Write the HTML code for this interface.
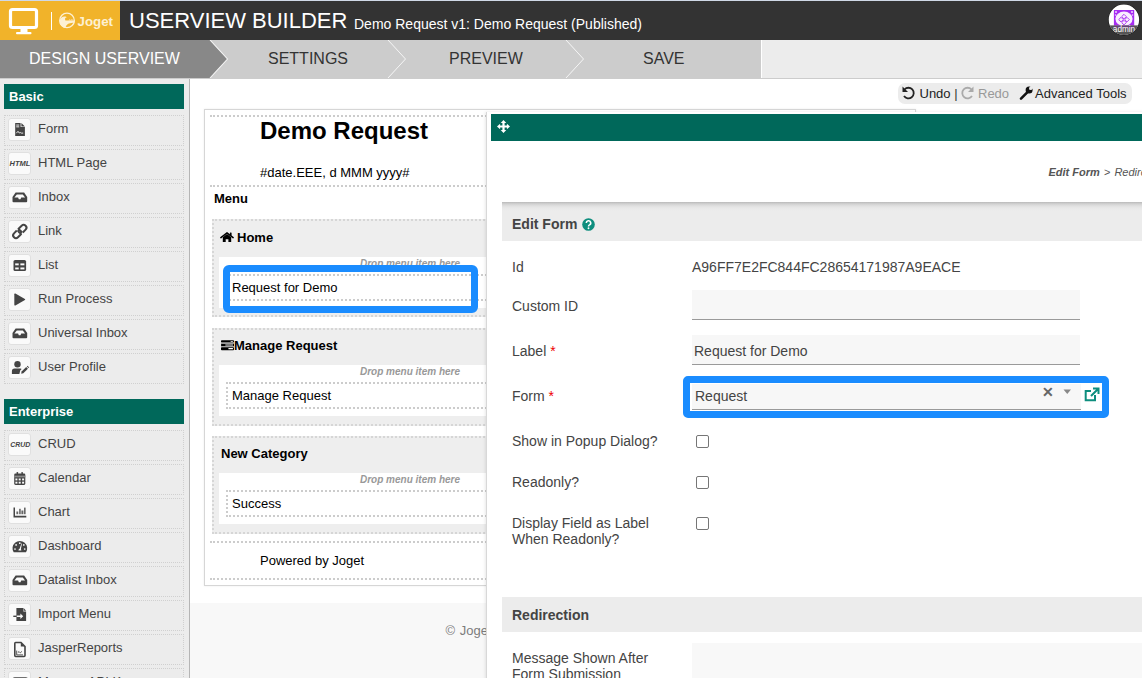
<!DOCTYPE html>
<html><head><meta charset="utf-8">
<style>
*{box-sizing:border-box;}
html,body{margin:0;padding:0;}
body{width:1142px;height:678px;overflow:hidden;position:relative;background:#fff;font-family:"Liberation Sans",sans-serif;color:#333;}
.a{position:absolute;white-space:nowrap;}
#topline{left:0;top:0;width:1142px;height:1px;background:#cfd8e6;}
#topbar{left:0;top:1px;width:1142px;height:39px;background:#333;}
#logo{left:0;top:1px;width:120px;height:39px;background:#f1b32a;}
#title{left:129px;top:8px;color:#fff;font-size:22px;line-height:26px;}
#subtitle{left:354px;top:16px;color:#fff;font-size:14px;line-height:16px;}
#nav{left:0;top:40px;width:1142px;height:39px;background:#ececec;border-bottom:1px solid #ccc;}
.tabt{top:40px;height:38px;font-size:16px;line-height:38px;color:#333;}
#sidebar{left:0;top:79px;width:190px;height:599px;background:#ececec;border-right:1px solid #b5b5b5;}
.hdr{position:absolute;left:4px;width:180px;height:25px;background:#00685a;color:#fff;font-weight:bold;font-size:13px;line-height:25px;padding-left:5px;}
.item{position:absolute;left:4px;width:180px;height:31px;border:1px dotted #d0d0d0;}
.item .ic{position:absolute;left:3px;top:2px;width:23px;height:23px;background:#fafafa;border:1px solid #e0e0e0;border-radius:3px;}
.item .ic svg{position:absolute;left:0;top:0;}
.item .tx{position:absolute;left:33px;top:-2px;line-height:29px;font-size:13px;color:#444;}

.cat{left:212px;width:700px;background:#eee;border:2px dotted #d6d6d6;}
.inner{left:219px;width:690px;background:#fff;}
.mi{left:226px;width:680px;height:27px;border:2px dotted #ccc;background:#fff;}
.drop{left:360px;font-size:10px;font-weight:bold;font-style:italic;color:#999;line-height:12px;}
.ct{font-size:13px;font-weight:bold;color:#000;line-height:16px;}
.mt{left:232px;font-size:13px;color:#000;line-height:16px;}

.lbl{font-size:14px;line-height:16px;color:#444;}
.req{color:#e00;}
.inp{left:692px;width:388px;height:30px;background:#f7f7f7;border-bottom:1px solid #9a9a9a;}
.cb{left:696px;width:13px;height:13px;border:1px solid #767676;border-radius:2px;background:#fff;}
</style></head>
<body>
<div id="topline" class="a"></div>
<div id="topbar" class="a"></div>
<div id="logo" class="a">
 <svg width="120" height="39" style="position:absolute;left:0;top:-1px">
  <rect x="10.5" y="9.5" width="26" height="18" rx="2" fill="none" stroke="#fff" stroke-width="3.2"/>
  <rect x="20.5" y="29" width="7" height="3" fill="#fff"/>
  <rect x="16" y="32" width="15.5" height="2.2" rx="1" fill="#fff"/>
  <rect x="51" y="12" width="1" height="18" fill="#fff"/>
  <circle cx="67" cy="20.4" r="7.3" fill="none" stroke="#fdf0d2" stroke-width="1.3"/>
  <path d="M59.6 21 C60 18.5 62 16.6 64.5 16.6 C65.8 16.6 66.8 17.2 66.6 17.5 C65.2 17.4 64.6 18.6 65.4 20.4 L74.7 20.4 L74.6 22.7 C70 22.8 67 23.5 65.9 26.5 L65.5 28.1 C62 27.5 59.6 24.8 59.6 21 Z" fill="#fdf0d2"/>
  <path d="M68.5 20.4 L69.5 19 L70.5 20 L72 19 L73.5 20.4Z" fill="#fdf0d2" opacity="0.7"/>
 </svg>
 <div class="a" style="left:77.5px;top:13px;font-size:13.3px;font-weight:bold;color:#fdf0d2;line-height:16px">Joget</div>
</div>
<div id="title" class="a">USERVIEW BUILDER</div>
<div id="subtitle" class="a">Demo Request v1: Demo Request (Published)</div>

<svg class="a" style="left:1106px;top:2px" width="36" height="36" viewBox="0 0 36 36">
 <defs><clipPath id="avc"><circle cx="17.9" cy="17.75" r="15.2"/></clipPath></defs>
 <circle cx="17.9" cy="17.75" r="15.7" fill="#111"/>
 <g clip-path="url(#avc)">
  <rect x="0" y="0" width="36" height="36" fill="#fff"/>
  <rect x="7.9" y="8" width="20.3" height="15.4" fill="#a62cf2"/>
  <ellipse cx="18" cy="16.8" rx="8.6" ry="7.2" fill="#fff" opacity="0.92"/>
  <g fill="#fff" opacity="0.8"><circle cx="10" cy="10" r="1"/><circle cx="26" cy="10" r="1"/><circle cx="9.5" cy="13" r="0.8"/><circle cx="26.5" cy="13" r="0.8"/></g>
  <g fill="none" stroke="#a62cf2" stroke-width="0.9">
   <path d="M18 12.3 L20.3 14.6 L18 16.9 L15.7 14.6 Z"/>
   <path d="M15 15.3 L17.3 17.6 L15 19.9 L12.7 17.6 Z"/>
   <path d="M21 15.3 L23.3 17.6 L21 19.9 L18.7 17.6 Z"/>
   <path d="M18 18.3 L20.3 20.6 L18 22.9 L15.7 20.6 Z"/>
  </g>
  <rect x="0" y="23.4" width="36" height="13" fill="#555"/>
  <rect x="7.9" y="23.4" width="20.3" height="3" fill="#6a3a8a" opacity="0.6"/>
  <text x="18" y="30.2" text-anchor="middle" font-family="Liberation Sans" font-size="8.2" fill="#fff">admin</text>
 </g>
</svg>
<div id="nav" class="a"></div>
<svg class="a" style="left:0;top:40px" width="762" height="38">
 <polygon points="566,0 761,0 761,38 566,38 583.5,19" fill="#ccc"/>
 <polygon points="388,0 566,0 583.5,19 566,38 388,38 405.5,19" fill="#ccc"/>
 <polygon points="210,0 388,0 405.5,19 388,38 210,38 227.5,19" fill="#ccc"/>
 <polygon points="0,0 210,0 227.5,19 210,38 0,38" fill="#888"/>
 <polyline points="210,0 227.5,19 210,38" fill="none" stroke="#f4f4f4" stroke-width="1.1"/>
 <polyline points="388,0 405.5,19 388,38" fill="none" stroke="#f4f4f4" stroke-width="1"/>
 <polyline points="566,0 583.5,19 566,38" fill="none" stroke="#f4f4f4" stroke-width="1"/>
 <rect x="761" y="0" width="1" height="38" fill="#fff"/>
</svg>
<div class="a tabt" style="left:29px;color:#fff">DESIGN USERVIEW</div>
<div class="a tabt" style="left:268px">SETTINGS</div>
<div class="a tabt" style="left:449px">PREVIEW</div>
<div class="a tabt" style="left:643px">SAVE</div>

<div id="sidebar" class="a">
  <div class="hdr" style="top:5px">Basic</div>
  <div class="item" style="top:36px"><div class="ic"><svg width="22" height="22" viewBox="0 0 22 22" style="position:absolute;left:-0.3px;top:-0.5px;overflow:visible"><path d="M6.2 3.9 H11.6 V8.1 H15.9 V17.1 H6.2 Z" fill="#444"/><path d="M12.4 3.9 L15.9 7.4 H12.4 Z" fill="#444"/><rect x="7.2" y="5.6" width="3" height="0.9" fill="#fafafa"/><rect x="7.2" y="7.4" width="3" height="0.9" fill="#fafafa"/><path d="M7.3 14.2 L9 12.3 L10.3 14 L11.3 13.5 L12.4 14.1 L14.2 14.1" stroke="#fafafa" stroke-width="0.9" fill="none"/></svg></div><div class="tx">Form</div></div>
  <div class="item" style="top:70px"><div class="ic"><svg width="22" height="22" viewBox="0 0 22 22" style="position:absolute;left:-0.3px;top:-0.5px;overflow:visible"><text x="0.6" y="13.4" font-family="Liberation Sans" font-weight="bold" font-style="italic" font-size="7.6" textLength="20.7" lengthAdjust="spacingAndGlyphs" fill="#444">HTML</text></svg></div><div class="tx">HTML Page</div></div>
  <div class="item" style="top:104px"><div class="ic"><svg width="22" height="22" viewBox="0 0 22 22" style="position:absolute;left:-0.3px;top:-0.5px;overflow:visible"><path d="M6.6 5.6 H15.1 L18.2 10 V14.3 Q18.2 15.3 17.2 15.3 H4.5 Q3.5 15.3 3.5 14.3 V10 Z" fill="#444"/><path d="M7.8 7.4 H13.8 L16.1 10.5 H12.2 L11.5 12.2 H9.8 L9.1 10.5 H5.4 Z" fill="#fafafa"/></svg></div><div class="tx">Inbox</div></div>
  <div class="item" style="top:138px"><div class="ic"><svg width="22" height="22" viewBox="0 0 22 22" style="position:absolute;left:-0.3px;top:-0.5px;overflow:visible"><g transform="rotate(-45 10.8 10.5)" fill="none" stroke="#444" stroke-width="2"><rect x="2.6" y="7.7" width="9.2" height="5.6" rx="2.8"/><rect x="9.8" y="7.7" width="9.2" height="5.6" rx="2.8"/></g><g transform="rotate(-45 10.8 10.5)"><rect x="9.3" y="6.3" width="1.6" height="1.8" fill="#fafafa"/><rect x="10.7" y="12.9" width="1.6" height="1.8" fill="#fafafa"/></g></svg></div><div class="tx">Link</div></div>
  <div class="item" style="top:172px"><div class="ic"><svg width="22" height="22" viewBox="0 0 22 22" style="position:absolute;left:-0.3px;top:-0.5px;overflow:visible"><rect x="4.5" y="4.9" width="12.6" height="11.2" rx="1.6" fill="#444"/><rect x="6.2" y="8.4" width="3.5" height="1.9" fill="#fafafa"/><rect x="11.4" y="8.4" width="4" height="1.9" fill="#fafafa"/><rect x="6.2" y="12.5" width="3.5" height="1.9" fill="#fafafa"/><rect x="11.4" y="12.5" width="4" height="1.9" fill="#fafafa"/></svg></div><div class="tx">List</div></div>
  <div class="item" style="top:206px"><div class="ic"><svg width="22" height="22" viewBox="0 0 22 22" style="position:absolute;left:-0.3px;top:-0.5px;overflow:visible"><path d="M5.3 5.2 Q5.3 4.0 6.4 4.6 L15.9 10 Q16.6 10.5 15.9 11 L6.4 16.4 Q5.3 17 5.3 15.8 Z" fill="#444"/></svg></div><div class="tx">Run Process</div></div>
  <div class="item" style="top:240px"><div class="ic"><svg width="22" height="22" viewBox="0 0 22 22" style="position:absolute;left:-0.3px;top:-0.5px;overflow:visible"><path d="M6.6 5.6 H15.1 L18.2 10 V14.3 Q18.2 15.3 17.2 15.3 H4.5 Q3.5 15.3 3.5 14.3 V10 Z" fill="#444"/><path d="M7.8 7.4 H13.8 L16.1 10.5 H12.2 L11.5 12.2 H9.8 L9.1 10.5 H5.4 Z" fill="#fafafa"/></svg></div><div class="tx">Universal Inbox</div></div>
  <div class="item" style="top:274px"><div class="ic"><svg width="22" height="22" viewBox="0 0 22 22" style="position:absolute;left:-0.3px;top:-0.5px;overflow:visible"><circle cx="8.5" cy="7.3" r="3.2" fill="#444"/><path d="M2.9 16.9 V14.2 Q2.9 11.5 5.6 11.5 H11.5 Q12.3 11.6 12.6 12 L11.2 13.6 L10.4 16.9 Z" fill="#444"/><path d="M12.2 16.7 L12.6 14.6 L17.2 10 L18.9 11.7 L14.3 16.3 Z" fill="#444"/><path d="M17.8 9.4 L18.5 8.7 L20.2 10.4 L19.5 11.1 Z" fill="#444"/></svg></div><div class="tx">User Profile</div></div>
  <div class="hdr" style="top:320px">Enterprise</div>
  <div class="item" style="top:351px"><div class="ic"><svg width="22" height="22" viewBox="0 0 22 22" style="position:absolute;left:-0.3px;top:-0.5px;overflow:visible"><text x="1.2" y="13.4" font-family="Liberation Sans" font-weight="bold" font-style="italic" font-size="7" textLength="20.1" lengthAdjust="spacingAndGlyphs" fill="#444">CRUD</text></svg></div><div class="tx">CRUD</div></div>
  <div class="item" style="top:385px"><div class="ic"><svg width="22" height="22" viewBox="0 0 22 22" style="position:absolute;left:-0.3px;top:-0.5px;overflow:visible"><rect x="5.2" y="5.6" width="11.1" height="11.3" rx="1.3" fill="#444"/><rect x="5.2" y="7.6" width="11.1" height="1.8" fill="#8a8a8a"/><rect x="7.6" y="3.9" width="1.5" height="2.5" rx="0.6" fill="#444"/><rect x="12.4" y="3.9" width="1.5" height="2.5" rx="0.6" fill="#444"/><g fill="#fafafa"><rect x="6.4" y="10.5" width="2" height="1.9"/><rect x="9.7" y="10.5" width="2" height="1.9"/><rect x="13.1" y="10.5" width="2" height="1.9"/><rect x="6.4" y="13.7" width="2" height="1.9"/><rect x="9.7" y="13.7" width="2" height="1.9"/><rect x="13.1" y="13.7" width="2" height="1.9"/></g></svg></div><div class="tx">Calendar</div></div>
  <div class="item" style="top:419px"><div class="ic"><svg width="22" height="22" viewBox="0 0 22 22" style="position:absolute;left:-0.3px;top:-0.5px;overflow:visible"><path d="M4.5 5.6 H6 V13.8 H17.3 V15.5 H4.5 Z" fill="#444"/><rect x="7.4" y="9.5" width="1.8" height="2.7" fill="#666"/><rect x="10.3" y="6.8" width="1.3" height="5.4" fill="#444"/><rect x="12.4" y="8.5" width="2" height="3.7" fill="#666"/><rect x="15.2" y="5.6" width="1.3" height="6.6" fill="#444"/></svg></div><div class="tx">Chart</div></div>
  <div class="item" style="top:453px"><div class="ic"><svg width="22" height="22" viewBox="0 0 22 22" style="position:absolute;left:-0.3px;top:-0.5px;overflow:visible"><path d="M4.7 16.3 A7.35 7.35 0 1 1 17 16.3 Z" fill="#444"/><g fill="#fafafa"><circle cx="6" cy="13" r="0.85"/><circle cx="15.7" cy="13" r="0.85"/><circle cx="7.1" cy="8.9" r="0.85"/><circle cx="14.8" cy="8.9" r="0.85"/><circle cx="10.8" cy="7.2" r="0.85"/></g><path d="M9.4 14.5 Q9.6 13 10.6 12.8 L12.5 7.4 Q12.9 7.2 13 7.6 L11.9 12.9 Q12.3 13.4 12.3 14.5 Z" fill="#fafafa"/></svg></div><div class="tx">Dashboard</div></div>
  <div class="item" style="top:487px"><div class="ic"><svg width="22" height="22" viewBox="0 0 22 22" style="position:absolute;left:-0.3px;top:-0.5px;overflow:visible"><path d="M6.6 5.6 H15.1 L18.2 10 V14.3 Q18.2 15.3 17.2 15.3 H4.5 Q3.5 15.3 3.5 14.3 V10 Z" fill="#444"/><path d="M7.8 7.4 H13.8 L16.1 10.5 H12.2 L11.5 12.2 H9.8 L9.1 10.5 H5.4 Z" fill="#fafafa"/></svg></div><div class="tx">Datalist Inbox</div></div>
  <div class="item" style="top:521px"><div class="ic"><svg width="22" height="22" viewBox="0 0 22 22" style="position:absolute;left:-0.3px;top:-0.5px;overflow:visible"><path d="M7.4 4.1 H14.3 V7.6 H17.1 V17.1 H7.4 Z" fill="#444"/><path d="M14.6 4.1 L17.1 6.7 H14.6 Z" fill="#444"/><rect x="4.3" y="11.6" width="3.5" height="1.4" fill="#444"/><path d="M7.8 11.5 H11.4 V9.6 L14.2 12.3 L11.4 15 V13.1 H7.8 Z" fill="#fafafa"/></svg></div><div class="tx">Import Menu</div></div>
  <div class="item" style="top:555px"><div class="ic"><svg width="22" height="22" viewBox="0 0 22 22" style="position:absolute;left:-0.3px;top:-0.5px;overflow:visible"><path d="M6.6 4.5 H12 L16 8.5 V17.6 Q16 18.5 15.1 18.5 H6.6 Q5.8 18.5 5.8 17.6 V5.4 Q5.8 4.5 6.6 4.5 Z" fill="none" stroke="#444" stroke-width="1.6"/><path d="M11.8 4.6 V8.6 H15.9 Z" fill="#444"/><path d="M7.7 12.6 V16.9 H14" fill="none" stroke="#444" stroke-width="0.9"/><path d="M8.9 14.5 L10.1 13.6 L11.3 14.9 L12.9 13.4" fill="none" stroke="#444" stroke-width="0.9"/></svg></div><div class="tx">JasperReports</div></div>
  <div class="item" style="top:589px"><div class="ic"><svg width="22" height="22" viewBox="0 0 22 22" style="position:absolute;left:-0.3px;top:-0.5px;overflow:visible"><rect x="4.3" y="6" width="14" height="10" rx="1.5" fill="none" stroke="#444" stroke-width="1.6"/></svg></div><div class="tx">Manage API Keys</div></div>
</div>

<!-- canvas area -->
<div class="a" style="left:190px;top:603px;width:952px;height:75px;background:#f8f8f8"></div>
<div class="a" style="left:445.5px;top:623px;font-size:13px;color:#7c7c7c;line-height:16px;word-spacing:1px">© Joget Inc</div>
<div class="a" id="undo" style="left:898px;top:83px;width:234px;height:21px;background:#ececec;border-radius:7px"></div>
<div class="a" style="left:919.5px;top:86px;font-size:13px;line-height:16px;color:#222">Undo <span style="color:#333">|</span></div>
<div class="a" style="left:978px;top:86px;font-size:13px;line-height:16px;color:#999">Redo</div>
<div class="a" style="left:1035px;top:86px;font-size:13px;line-height:16px;color:#222">Advanced Tools</div>
<svg class="a" style="left:900px;top:84px" width="140" height="20">
 <path d="M4.5 5.5 A5.3 5.3 0 1 1 4 12" fill="none" stroke="#222" stroke-width="1.8"/>
 <path d="M2.5 2.5 L2.5 8 L8 8 Z" fill="#222"/>
 <path d="M71.5 5.5 A5.3 5.3 0 1 0 72 12" fill="none" stroke="#aaa" stroke-width="1.8"/>
 <path d="M73.5 2.5 L73.5 8 L68 8 Z" fill="#aaa"/>
 </svg><svg class="a" style="left:1015px;top:84px" width="20" height="18" viewBox="0 0 20 18"><path d="M6 14.6 L13 7.6" stroke="#111" stroke-width="2.6" stroke-linecap="round"/><circle cx="14.1" cy="6" r="3.5" fill="#111"/><circle cx="15.5" cy="4.6" r="1.5" fill="#ececec"/><path d="M14.4 3.5 L16.6 5.7 L19.5 2.8 L17.3 0.6 Z" fill="#ececec"/></svg>

<div class="a" id="canvasbox" style="left:204px;top:109px;width:712px;height:477px;border:1px solid #d6d6d6;box-shadow:0 0 2px rgba(0,0,0,0.08)"></div>
<!-- header section -->
<div class="a" style="left:210px;top:115px;width:700px;height:72px;border-top:2px dotted #ccc;border-bottom:2px dotted #ccc"></div>
<div class="a" style="left:260px;top:117px;font-size:24px;font-weight:bold;color:#000;line-height:28px">Demo Request</div>
<div class="a" style="left:260px;top:165px;font-size:13px;color:#000;line-height:16px">#date.EEE, d MMM yyyy#</div>
<div class="a" style="left:214px;top:191px;font-size:13px;font-weight:bold;color:#000;line-height:16px">Menu</div>

<!-- categories -->
<div class="a cat" style="top:219px;height:98px"></div>
<div class="a cat" style="top:328px;height:98px"></div>
<div class="a cat" style="top:436px;height:98px"></div>
<div class="a inner" style="top:257px;height:51px"></div>
<div class="a inner" style="top:365px;height:51px"></div>
<div class="a inner" style="top:473px;height:51px"></div>
<div class="a mi" style="top:274px"></div>
<div class="a mi" style="top:382px"></div>
<div class="a mi" style="top:490px"></div>
<div class="a drop" style="top:258px">Drop menu item here</div>
<div class="a drop" style="top:366px">Drop menu item here</div>
<div class="a drop" style="top:474px">Drop menu item here</div>
<div class="a ct" style="left:237px;top:230px">Home</div>
<svg class="a" style="left:220px;top:232px" width="14" height="11" viewBox="0 0 14 11"><path d="M0.9 5.6 L7 0.9 L13.1 5.6" fill="none" stroke="#000" stroke-width="1.5" stroke-linecap="round"/><rect x="9.9" y="0.6" width="1.7" height="3.2" rx="0.4" fill="#000"/><path d="M2.8 5.2 L7 2 L11.2 5.2 V9.9 H8.4 V7.2 H5.7 V9.9 H2.8 Z" fill="#000"/></svg>
<div class="a ct" style="left:234px;top:338px">Manage Request</div>
<svg class="a" style="left:221px;top:339.5px" width="13" height="11" viewBox="0 0 13 11"><rect x="0" y="0.2" width="13" height="2.4" rx="0.8" fill="#000"/><rect x="9.5" y="1" width="2.6" height="0.9" rx="0.4" fill="#bbb"/><rect x="0" y="2.6" width="13" height="1.2" fill="#8a8a8a"/><rect x="0" y="3.9" width="13" height="2.2" rx="0.8" fill="#777"/><rect x="0" y="3.9" width="4.5" height="2.2" rx="0.8" fill="#000"/><rect x="12" y="3.9" width="1" height="2.2" fill="#000"/><rect x="0" y="6.1" width="13" height="1.1" fill="#999"/><rect x="0" y="7.2" width="13" height="3" rx="0.8" fill="#000"/><rect x="7.3" y="8.1" width="4.8" height="1.2" rx="0.6" fill="#fff"/></svg>
<div class="a ct" style="left:221px;top:446px">New Category</div>
<div class="a mt" style="top:280px">Request for Demo</div>
<div class="a mt" style="top:388px">Manage Request</div>
<div class="a mt" style="top:496px">Success</div>
<div class="a" style="left:223px;top:265px;width:255px;height:48px;border:7px solid #1a8cff;border-radius:6px"></div>

<div class="a" style="left:210px;top:541px;width:700px;height:39px;border-top:2px dotted #ccc;border-bottom:2px dotted #ccc"></div>
<div class="a" style="left:260px;top:553px;font-size:13px;color:#000;line-height:16px">Powered by Joget</div>


<!-- dialog -->
<div class="a" style="left:486px;top:112px;width:670px;height:580px;background:#fff;border-left:1px solid #d8d8d8;box-shadow:-1px 0 3px rgba(0,0,0,0.09)"></div>
<div class="a" style="left:491px;top:114px;width:651px;height:27px;background:#00685a"></div>
<svg class="a" style="left:496.5px;top:119.5px" width="13" height="13" viewBox="0 0 13 13"><path d="M6.5 0 L9.3 3.1 L7.6 3.1 L7.6 5.4 L9.9 5.4 L9.9 3.7 L13 6.5 L9.9 9.3 L9.9 7.6 L7.6 7.6 L7.6 9.9 L9.3 9.9 L6.5 13 L3.7 9.9 L5.4 9.9 L5.4 7.6 L3.1 7.6 L3.1 9.3 L0 6.5 L3.1 3.7 L3.1 5.4 L5.4 5.4 L5.4 3.1 L3.7 3.1 Z" fill="#fff"/></svg>

<div class="a" style="left:1048.5px;top:165px;font-size:11px;line-height:14px;color:#555;z-index:3"><b><i>Edit Form</i></b><span style="margin:0 1px 0 1px"> &gt; </span><i>Redirection</i></div>
<div class="a" style="left:502px;top:202px;width:640px;height:39px;background:linear-gradient(to bottom,#b9b9b9 0px,#d2d2d2 2px,#e0e0e0 4px,#e8e8e8 6px,#ececec 9px)"></div>
<div class="a lbl" style="left:512px;top:216px;font-weight:bold">Edit Form</div>
<svg class="a" style="left:581.5px;top:217.8px" width="13" height="13" viewBox="0 0 13 13"><circle cx="6.5" cy="6.5" r="6.3" fill="#0e8e7e"/><path d="M4.3 5 a2.2 2.2 0 1 1 3.2 1.9 q-1 .5 -1 1.5" stroke="#fff" stroke-width="1.6" fill="none"/><circle cx="6.5" cy="10.2" r="0.95" fill="#fff"/></svg>

<div class="a lbl" style="left:512px;top:259px">Id</div>
<div class="a lbl" style="left:692px;top:259px">A96FF7E2FC844FC28654171987A9EACE</div>
<div class="a lbl" style="left:512px;top:298px">Custom ID</div>
<div class="a inp" style="top:290px"></div>
<div class="a lbl" style="left:512px;top:343px">Label <span class="req">*</span></div>
<div class="a inp" style="top:335px"></div>
<div class="a lbl" style="left:694px;top:343px">Request for Demo</div>
<div class="a lbl" style="left:512px;top:388px">Form <span class="req">*</span></div>
<div class="a inp" style="top:384px;height:26px;width:389px"></div>
<div class="a lbl" style="left:695px;top:388px">Request</div>
<div class="a" style="left:683px;top:376px;width:426px;height:42px;border:7px solid #1a8cff;border-radius:5px"></div>
<div class="a" style="left:1042px;top:384px;font-size:14px;font-weight:bold;color:#666;line-height:16px">✕</div>
<svg class="a" style="left:1063px;top:389px" width="9" height="6"><path d="M0.5 0.5 L8 0.5 L4.25 5 Z" fill="#888"/></svg>
<svg class="a" style="left:1084px;top:387px" width="16" height="15" viewBox="0 0 16 15"><path d="M9 1.5 L14.5 1.5 L14.5 7 M14.5 1.5 L7 9 M11 8 L11 13.3 L1.7 13.3 L1.7 4 L7 4" stroke="#0e8e7e" stroke-width="2" fill="none"/></svg>

<div class="a lbl" style="left:512px;top:433px">Show in Popup Dialog?</div>
<div class="a cb" style="top:435px"></div>
<div class="a lbl" style="left:512px;top:474px">Readonly?</div>
<div class="a cb" style="top:476px"></div>
<div class="a lbl" style="left:512px;top:515px;line-height:16px">Display Field as Label<br>When Readonly?</div>
<div class="a cb" style="top:517px"></div>

<div class="a" style="left:502px;top:597px;width:640px;height:35px;background:#ececec"></div>
<div class="a lbl" style="left:512px;top:607px;font-weight:bold">Redirection</div>
<div class="a lbl" style="left:512px;top:650px;line-height:16px">Message Shown After<br>Form Submission</div>
<div class="a" style="left:692px;top:643px;width:450px;height:40px;background:#f8f8f8"></div>

</body></html>
